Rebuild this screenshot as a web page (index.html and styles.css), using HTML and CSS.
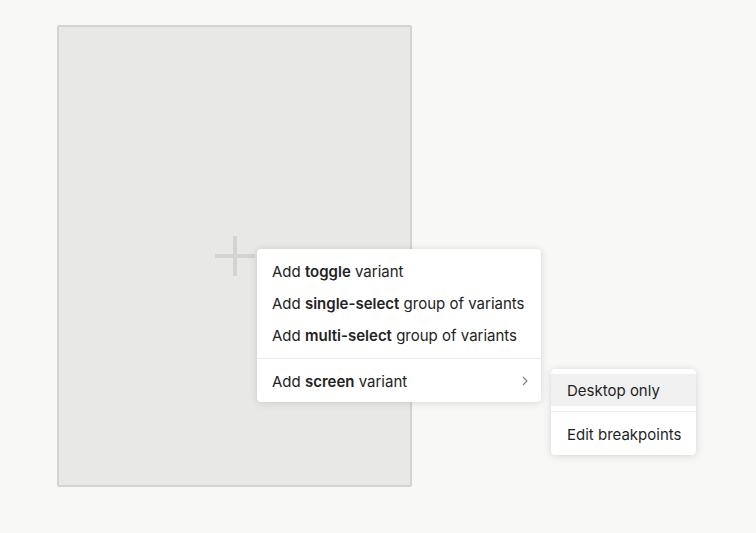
FILE: index.html
```html
<!DOCTYPE html>
<html>
<head>
<meta charset="utf-8">
<link rel="stylesheet" href="styles.css">
</head>
<body>
<div class="canvas">
  <div class="frame">
    <svg class="plus" width="40" height="40" viewBox="0 0 40 40"><rect x="18" y="0" width="4" height="40" fill="#d3d3d1"/><rect x="0" y="18" width="40" height="4" fill="#d3d3d1"/></svg>
  </div>
  <div class="menu">
    <div class="item"><span>Add <b>toggle</b> variant</span></div>
    <div class="item"><span>Add <b>single-select</b> group of variants</span></div>
    <div class="item"><span>Add <b>multi-select</b> group of variants</span></div>
    <div class="sep"></div>
    <div class="item has-sub">
      <span>Add <b>screen</b> variant</span>
      <svg class="chev" width="6" height="10" viewBox="0 0 6 10"><path d="M1 1 L5 5 L1 9" fill="none" stroke="#8a7a6a" stroke-width="1.1"/></svg>
    </div>
  </div>
  <div class="submenu">
    <div class="item active"><span>Desktop only</span></div>
    <div class="sep"></div>
    <div class="item"><span>Edit breakpoints</span></div>
  </div>
</div>
</body>
</html>
```

FILE: styles.css
```css
html, body {
  margin: 0;
  padding: 0;
  background: #f8f8f7;
  font-family: Inter, "Noto Sans", sans-serif;
}
.canvas {
  position: relative;
  width: 756px;
  height: 533px;
  padding: 25px 0 0 57px;
  box-sizing: border-box;
}
.frame {
  width: 355px;
  height: 462px;
  box-sizing: border-box;
  border: 2px solid #d3d3d1;
  border-radius: 2px;
  background: #e8e8e6;
  display: flex;
  align-items: center;
  justify-content: center;
}
.plus { display: block; }
.menu, .submenu {
  position: absolute;
  background: #fff;
  border-radius: 4px;
  box-shadow: 0 1px 8px rgba(0,0,0,0.13), 0 0 1px rgba(0,0,0,0.1);
}
.menu {
  left: 257px;
  top: 249px;
  width: 284px;
  padding: 6px 0 5px;
}
.submenu {
  left: 551px;
  top: 369px;
  width: 145px;
  padding: 5px 0;
}
.item {
  height: 32px;
  display: flex;
  align-items: center;
  padding: 0 15px;
  font-size: 15px;
  color: #232323;
  white-space: nowrap;
}
.menu .item:nth-child(2), .menu .item:nth-child(3) { height: 32.5px; }
.item b { font-weight: 600; }
.submenu .item { padding: 0 16px; color: #1e1f26; }
.has-sub { justify-content: space-between; padding-right: 13px; }
.chev { display: block; }
.sep {
  height: 1px;
  background: #ebebea;
  margin: 6px 0;
}
.submenu .sep { margin: 5px 0 6px; }
.active { background: #f0f0f0; }
```
